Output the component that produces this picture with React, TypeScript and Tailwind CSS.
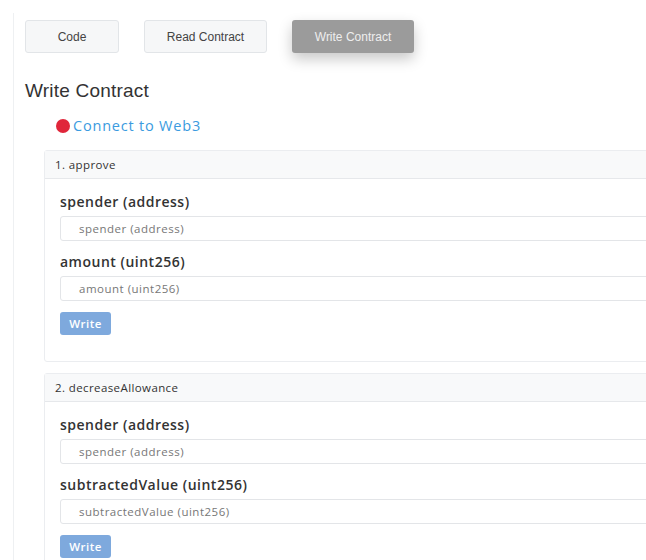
import React from "react";

const sans = { fontFamily: '"Liberation Sans", Arial, sans-serif' };
const mont = { fontFamily: '"Open Sans", "Noto Sans", sans-serif' };

function Field({ label }: { label: string }) {
  return (
    <div>
      <div
        className="text-[14px] font-semibold tracking-[0.5px] text-[#333] leading-[20px] mb-[4px]"
        style={mont}
      >
        {label}
      </div>
      <div
        className="h-[25px] rounded-[3px] border border-[#e3e5e8] bg-white pl-[18px] flex items-center text-[11.5px] tracking-[0.5px] text-[#777]"
        style={mont}
      >
        {label}
      </div>
    </div>
  );
}

function Method({ title, fields }: { title: string; fields: string[] }) {
  return (
    <div className="w-[700px] rounded-[3px] border border-[#ebedf0] bg-white">
      <div
        className="h-[28px] bg-[#f8f9fa] border-b border-[#e6e8eb] pl-[10px] flex items-center text-[11.5px] tracking-[0.4px] text-[#333]"
        style={mont}
      >
        {title}
      </div>
      <div className="pl-[15px] pt-[13px] pb-[26px] flex flex-col gap-[11px]">
        {fields.map((f) => (
          <Field key={f} label={f} />
        ))}
        <div className="-mt-[2px]">
          <button
            className="h-[23px] w-[51px] rounded-[3px] bg-[#7ea9dd] text-white text-[11.5px] tracking-[0.5px] font-semibold"
            style={mont}
          >
            Write
          </button>
        </div>
      </div>
    </div>
  );
}

export default function App() {
  return (
    <div className="w-[646px] h-[560px] overflow-hidden bg-white">
      <div className="ml-[13px] mt-[13px] h-[547px] border-l border-[#eef0f2] pl-[11px] pt-[7px]">
        <div className="flex gap-[25px]" style={sans}>
          <button className="w-[94px] h-[33px] rounded-[3px] border border-[#e2e5e8] bg-[#f6f7f8] text-[12px] text-[#444]">
            Code
          </button>
          <button className="w-[123px] h-[33px] rounded-[3px] border border-[#e2e5e8] bg-[#f6f7f8] text-[12px] text-[#444]">
            Read Contract
          </button>
          <button className="w-[122px] h-[33px] rounded-[3px] bg-[#9b9b9b] text-[12px] text-[#eeeeee] shadow-[0_6px_14px_rgba(0,0,0,0.22)]">
            Write Contract
          </button>
        </div>
        <div className="mt-[26px] text-[19px] tracking-[0.2px] text-[#333] leading-[24px]" style={sans}>
          Write Contract
        </div>
        <div className="mt-[12px] ml-[31px] flex items-center gap-[3px]" style={mont}>
          <span className="w-[14px] h-[14px] rounded-full bg-[#e0263a]" />
          <span className="text-[14.5px] tracking-[0.8px] text-[#3b9be0]">Connect to Web3</span>
        </div>
        <div className="mt-[13px] ml-[19px] flex flex-col gap-[11px]">
          <Method title="1. approve" fields={["spender (address)", "amount (uint256)"]} />
          <Method title="2. decreaseAllowance" fields={["spender (address)", "subtractedValue (uint256)"]} />
        </div>
      </div>
    </div>
  );
}
